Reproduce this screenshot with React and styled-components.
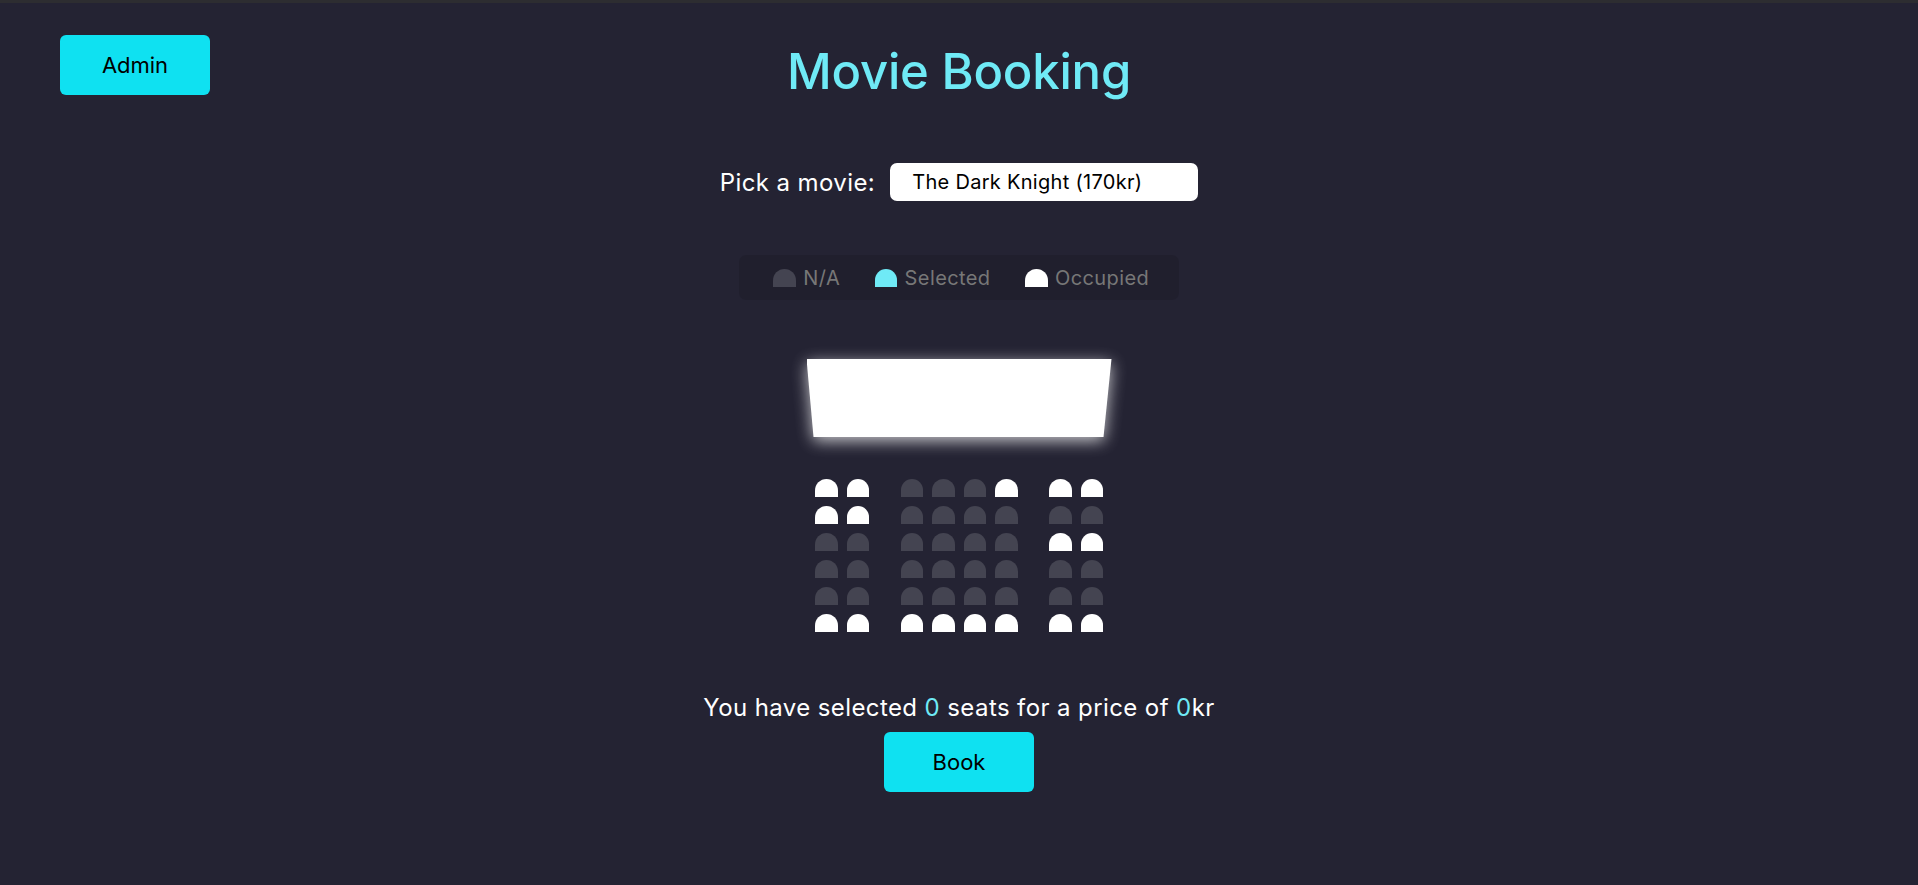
import React, { useState } from "react";
import styled, { createGlobalStyle } from "styled-components";

const GlobalStyle = createGlobalStyle`
  * {
    box-sizing: border-box;
  }
  body {
    margin: 0;
    background: #242333;
    color: #fff;
    font-family: Inter, "Open Sans", "Noto Sans", sans-serif;
  }
`;

const Page = styled.div`
  min-height: 100vh;
  border-top: 3px solid #2d2d31;
  display: flex;
  flex-direction: column;
  align-items: center;
`;

const Header = styled.header`
  width: 100%;
  display: grid;
  grid-template-columns: 1fr auto 1fr;
  align-items: start;
  padding: 32px 60px 0;
`;

const CyanButton = styled.button`
  width: 150px;
  height: 60px;
  border: 0;
  border-radius: 6px;
  background: #0fe1f1;
  color: #000;
  font-family: inherit;
  font-size: 22px;
  cursor: pointer;
  justify-self: start;
`;

const Title = styled.h1`
  margin: 7px 0 0;
  font-size: 49px;
  line-height: 60px;
  font-weight: 500;
  letter-spacing: -0.2px;
  color: #6feaf6;
`;

const PickRow = styled.div`
  display: flex;
  align-items: center;
  margin-top: 61px;
  font-size: 24px;
  letter-spacing: 0.4px;
`;

const MovieSelect = styled.select`
  appearance: none;
  width: 308px;
  height: 38px;
  margin-left: 15px;
  padding: 0 22px;
  border: 0;
  border-radius: 7px;
  background: #fff;
  color: #000;
  font-family: inherit;
  font-size: 20px;
  letter-spacing: 0.3px;
  outline: none;
`;

const Legend = styled.ul`
  display: flex;
  align-items: center;
  height: 45px;
  margin: 54px 0 0;
  padding: 0 15px;
  list-style: none;
  border-radius: 7px;
  background: rgba(0, 0, 0, 0.1);
  color: #777;
`;

const LegendItem = styled.li`
  display: flex;
  align-items: center;
  margin: 0 15px;
  font-size: 20px;
  letter-spacing: 0.4px;

  small {
    font-size: inherit;
    margin-left: 3px;
  }
`;

const Seat = styled.div`
  width: 22.5px;
  height: 18px;
  margin: 4.5px;
  border-top-left-radius: 15px;
  border-top-right-radius: 15px;
  background: ${(p) =>
    p.$status === "occupied"
      ? "#fff"
      : p.$status === "selected"
      ? "#6feaf6"
      : "#444451"};
  cursor: ${(p) => (p.$status === "occupied" ? "default" : "pointer")};
`;

const ScreenGlow = styled.div`
  margin: 59px 0 37px;
  filter: drop-shadow(0 4px 8px rgba(255, 255, 255, 0.75));
`;

const Screen = styled.div`
  width: 305px;
  height: 78px;
  background: #fff;
  clip-path: polygon(0 0, 100% 0, calc(100% - 8px) 100%, 7px 100%);
`;

const SeatRow = styled.div`
  display: flex;

  ${Seat}:nth-of-type(2) {
    margin-right: 27px;
  }
  ${Seat}:nth-last-of-type(2) {
    margin-left: 27px;
  }
`;

const Summary = styled.p`
  margin: 54px 0 6px;
  font-size: 24px;
  line-height: 36px;
  letter-spacing: 0.4px;

  span {
    color: #6feaf6;
  }
`;

const movies = [
  { title: "The Dark Knight", price: 170 },
  { title: "Inception", price: 150 },
  { title: "Interstellar", price: 160 },
  { title: "Dunkirk", price: 140 },
];

const layout = [
  "oonnnooo",
  "oonnnnnn",
  "nnnnnnoo",
  "nnnnnnnn",
  "nnnnnnnn",
  "oooooooo",
];

export default function App() {
  const [movie, setMovie] = useState(0);
  const [selected, setSelected] = useState([]);

  const toggleSeat = (key, occupied) => {
    if (occupied) return;
    setSelected((s) =>
      s.includes(key) ? s.filter((k) => k !== key) : [...s, key]
    );
  };

  const count = selected.length;

  return (
    <Page>
      <GlobalStyle />
      <Header>
        <CyanButton>Admin</CyanButton>
        <Title>Movie Booking</Title>
        <div />
      </Header>

      <PickRow>
        <label htmlFor="movie">Pick a movie:</label>
        <MovieSelect
          id="movie"
          value={movie}
          onChange={(e) => setMovie(Number(e.target.value))}
        >
          {movies.map((m, i) => (
            <option key={m.title} value={i}>
              {m.title} ({m.price}kr)
            </option>
          ))}
        </MovieSelect>
      </PickRow>

      <Legend>
        <LegendItem>
          <Seat $status="na" />
          <small>N/A</small>
        </LegendItem>
        <LegendItem>
          <Seat $status="selected" />
          <small>Selected</small>
        </LegendItem>
        <LegendItem>
          <Seat $status="occupied" />
          <small>Occupied</small>
        </LegendItem>
      </Legend>

      <ScreenGlow>
        <Screen />
      </ScreenGlow>

      <div>
        {layout.map((row, r) => (
          <SeatRow key={r}>
            {row.split("").map((c, i) => {
              const key = `${r}-${i}`;
              const occupied = c === "o";
              const status = occupied
                ? "occupied"
                : selected.includes(key)
                ? "selected"
                : "na";
              return (
                <Seat
                  key={key}
                  $status={status}
                  onClick={() => toggleSeat(key, occupied)}
                />
              );
            })}
          </SeatRow>
        ))}
      </div>

      <Summary>
        You have selected <span>{count}</span> seats for a price of{" "}
        <span>{count * movies[movie].price}</span>kr
      </Summary>
      <CyanButton>Book</CyanButton>
    </Page>
  );
}
